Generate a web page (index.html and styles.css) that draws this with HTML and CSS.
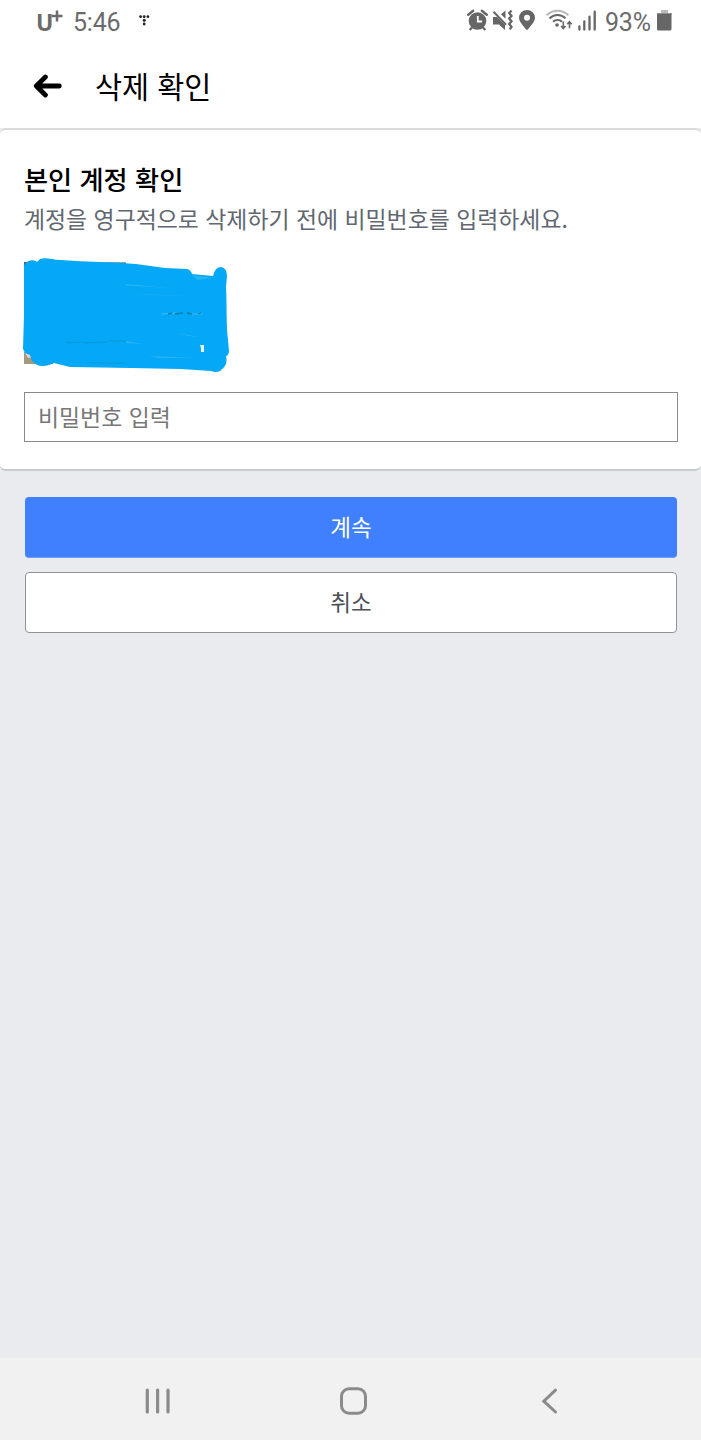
FILE: index.html
```html
<!DOCTYPE html>
<html lang="ko">
<head>
<meta charset="utf-8">
<title>삭제 확인</title>
<link rel="stylesheet" href="styles.css">
</head>
<body>
<div class="screen">
  <div class="status">
    <span class="carrier">U<svg width="12" height="12" viewBox="0 0 12 12"><path d="M6 0.5v11M0.5 6h11" stroke="#6b6b6b" stroke-width="2.5"/></svg></span>
    <span class="clock">5:46</span>
    <svg class="dots" width="11" height="12" viewBox="0 0 11 12"><g fill="#222"><circle cx="1.6" cy="1.7" r="1.4"/><circle cx="5.2" cy="1.7" r="1.4"/><circle cx="8.9" cy="1.7" r="1.4"/><circle cx="5.2" cy="5.3" r="1.5"/><circle cx="5.2" cy="9" r="1.4"/></g></svg>
    <svg class="system" width="132" height="26" viewBox="466 8 132 26">
      <g fill="none" stroke="#666">
        <path d="M468.2 14.8l5-4M481.8 10.8l5 4" stroke-width="2.4" stroke-linecap="round"/>
        <path d="M472 27.5l-2.3 2.5M483 27.5l2.3 2.5" stroke-width="2.2"/>
      </g>
      <circle cx="477.5" cy="21" r="8.8" fill="#666"/>
      <path d="M477.8 16v5.5h4.2" fill="none" stroke="#fff" stroke-width="1.8"/>
      <path d="M493 17h4l8 8v5l-6-5.5h-6zM501 14.2l4.5-3.7v8.2z" fill="#666"/>
      <path d="M493.5 11.8l12.5 13" stroke="#666" stroke-width="2"/>
      <path d="M511.5 10.5l-2.3 2.6 2.3 2.8-2.3 2.7 2.3 2.7-2.3 2.8 2.3 2.7-1.7 2.5" fill="none" stroke="#666" stroke-width="2.3"/>
      <path d="M527 30.3C524 26.5 519 22 519 17.7a8 7.7 0 0 1 16 0C535 22 530 26.5 527 30.3z" fill="#666"/>
      <circle cx="527" cy="17.7" r="3" fill="#fff"/>
      <g fill="none" stroke-width="2">
        <path d="M546.5 15.2c6.5-6 15.5-6 22 0" stroke="#b8b8b8"/>
        <path d="M549.5 18.4c4.8-4.5 11.5-4.5 16 0M553 21.8c2.7-2.5 6.5-2.5 9 0" stroke="#666"/>
        <path d="M563.3 21.5v7M561.1 26l2.2 2.5 2.2-2.5M569.5 28.3v-6M567.3 24.2l2.2-2.5 2.2 2.5" stroke="#666" stroke-width="1.6"/>
      </g>
      <circle cx="557" cy="25" r="1.8" fill="#666"/>
      <path d="M579.4 26.5v3M584.3 21.5v8M589.5 16.7v12.8M594.7 11.7v17.8" stroke="#666" stroke-width="2.3" stroke-linecap="round"/>
    </svg>
    <span class="percent">93%</span>
    <svg class="battery" width="15" height="21" viewBox="0 0 15 21"><path d="M4 0h7v3h4v2H0V3h4z" fill="#bbb"/><path d="M0 3.5h14.5V19a1.5 1.5 0 0 1-1.5 1.5H1.5A1.5 1.5 0 0 1 0 19z" fill="#666"/></svg>
  </div>
  <header class="header">
    <svg width="30" height="24" viewBox="0 0 30 24"><path d="M13.4 3L4.3 12l9.1 9M5.3 12h22" fill="none" stroke="#000" stroke-width="4.8" stroke-linecap="round" stroke-linejoin="round"/></svg>
    <h1 class="title">삭제 확인</h1>
  </header>
  <main class="content">
    <section class="card">
      <h2 class="heading">본인 계정 확인</h2>
      <p class="desc">계정을 영구적으로 삭제하기 전에 비밀번호를 입력하세요.</p>
      <svg class="scribble" width="208" height="116" viewBox="22 257 208 116">
        <path d="M24 262h3v3h-3z" fill="#69535b"/><path d="M98 262.4h28v3H98z" fill="#456f70"/>
        <path d="M24 352h14v12H24z" fill="#a39b7c"/><path d="M25 353h6l4 4-7 1z" fill="#ddd1de"/><path d="M45 361h8v3h-8z" fill="#92445a"/>
        <path d="M24 265C27 260 34 259 37 262L40 259C46 257 52 260 61 260C87 262 112 262 136 264L165 268L187 269Q191 270 192 274L213 276Q215 267 221 267Q227 268 227 276L226 287C227 302 226 324 228 340L229 352Q228 356 226 356C228 364 224 368 220 371Q216 373 211 371L181 369L131 368L70 367L54 363C48 366 42 367 37 365L32 361L30 355L25 353L23 349L24 315z" fill="#04a8f6"/>
        <path d="M126 284l44 4-44-2.5zM132 294l66 2-48-1zM192 275l21 3-15 2zM176 333l24 4-11-1zM126 341l18 3-18-1zM149 356l49 2-40 0z" fill="#37b8f4" opacity=".7"/>
        <path d="M161 314l15-1M190 314l12 0" stroke="#38bdf7"/>
        <path d="M168 314l4-1M175 314l8-1M187 313l5 1M198 314l3-1" stroke="#087fa7" stroke-width="1.3"/>
        <path d="M66 343l15-1M83 343l24-1M108 341l18 0M87 363l37 0" stroke="#0799d8"/>
        <path d="M200 345h4v7h-3v-4z" fill="#e8f8fb"/>
      </svg>
      <input class="password" type="password" placeholder="비밀번호 입력">
    </section>
    <div class="actions">
      <button class="btn primary">계속</button>
      <button class="btn secondary">취소</button>
    </div>
  </main>
  <nav class="nav">
    <svg width="701" height="82" viewBox="0 1358 701 82" fill="none" stroke="#8b8b8b">
      <path d="M147.3 1390v22M157.6 1390v22M168 1390v22" stroke-width="3.2" stroke-linecap="round"/>
      <rect x="341.5" y="1388.8" width="24" height="24.4" rx="7.5" stroke-width="3"/>
      <path d="M555.5 1390.2L543.8 1401.2L555.5 1412" stroke-width="3" stroke-linecap="round"/>
    </svg>
  </nav>
</div>
</body>
</html>
```
FILE: styles.css
```css
* { box-sizing: border-box; }
body {
  margin: 0;
  font-family: "Noto Sans CJK KR", sans-serif;
  background: #e9ebee;
}
svg { display: block; flex: none; }
.screen {
  width: 701px;
  height: 1440px;
  display: flex;
  flex-direction: column;
  overflow: hidden;
}
.status {
  height: 43px;
  flex: none;
  display: flex;
  align-items: flex-start;
  background: #fff;
  color: #6b6b6b;
  font-family: Roboto, sans-serif;
  padding-left: 36px;
}
.carrier {
  display: flex;
  width: 37px;
  padding-top: 8px;
  font: 700 23px/28px "Open Sans", sans-serif;
}
.carrier svg { margin-top: 2px; margin-left: -2px; }
.clock {
  width: 66px;
  padding-top: 9px;
  font-size: 25px;
  line-height: 28px;
  letter-spacing: -0.2px;
}
.dots { margin-top: 15px; }
.system { margin: 8px 7px 0 316px; }
.percent {
  width: 52px;
  padding-top: 9px;
  font-size: 25px;
  line-height: 28px;
  letter-spacing: -0.2px;
}
.battery { margin-top: 10px; }
.header {
  height: 85px;
  flex: none;
  display: flex;
  align-items: center;
  gap: 33px;
  padding-left: 32px;
  background: #fff;
}
.title {
  margin: 0;
  padding-bottom: 2px;
  font-size: 29.4px;
  font-weight: 400;
  line-height: 40px;
  color: #000;
}
.content {
  flex: 1;
  min-height: 0;
}
.card {
  height: 343px;
  display: flex;
  flex-direction: column;
  padding: 33px 23px 0 24px;
  background: #fff;
  border-top: 2px solid #dadbdd;
  border-bottom: 2px solid #c8cacd;
  border-radius: 6px;
}
.heading {
  margin: 0;
  font-size: 26.2px;
  font-weight: 500;
  line-height: 32px;
  color: #000;
}
.desc {
  margin: 7px 0 0;
  font-size: 22.9px;
  line-height: 32px;
  color: #606770;
  white-space: nowrap;
}
.scribble { margin: 23px 0 19px -2px; }
.password {
  width: 654px;
  height: 50px;
  padding: 0 13px 2px;
  border: 1px solid #888a8e;
  border-radius: 0;
  background: #fff;
  font-family: inherit;
  font-size: 22.9px;
}
.password::placeholder { color: #777; opacity: 1; }
.actions {
  display: flex;
  flex-direction: column;
  gap: 14px;
  padding: 26px 24px 0 25px;
}
.btn {
  height: 61px;
  padding: 0 0 2px;
  border-radius: 4px;
  font-family: inherit;
  font-size: 22.5px;
}
.primary {
  background: #4080ff;
  border: 0;
  border-bottom: 1px solid #6c9bfd;
  color: #fff;
}
.secondary {
  padding-bottom: 3px;
  background: #fff;
  border: 1px solid #8f9297;
  color: #4b4f56;
}
.nav {
  height: 82px;
  flex: none;
  background: #f1f1f1;
}
```
